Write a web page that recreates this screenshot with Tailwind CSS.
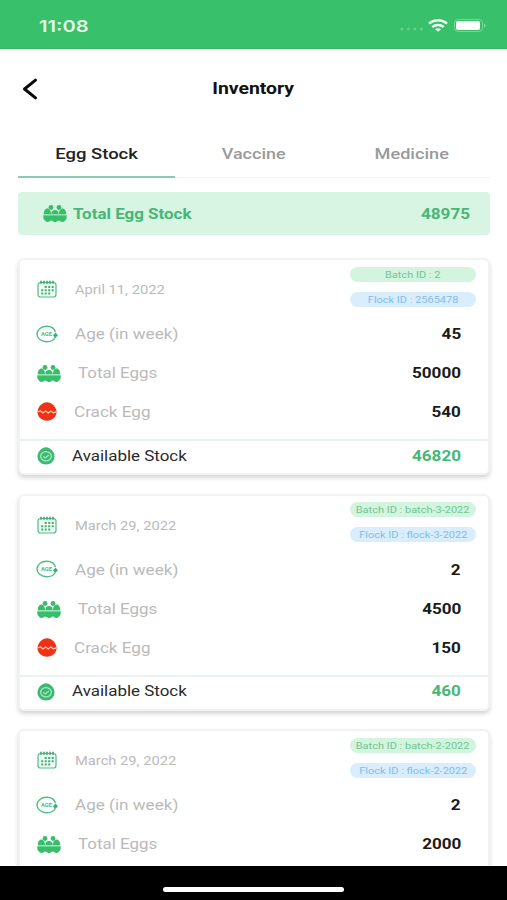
<!DOCTYPE html>
<html lang="en">
<head>
    <meta charset="UTF-8">
    <meta name="viewport" content="width=device-width, initial-scale=1.0">
    <title>Inventory</title>
    <script src="https://cdn.jsdelivr.net/npm/@tailwindcss/browser@4"></script>
</head>
<body class="h-screen flex flex-col overflow-hidden bg-white font-[Roboto,sans-serif]">
    <!-- Icons -->
    <svg class="hidden">
        <symbol id="eggs" viewBox="0 0 24 17">
            <g fill="#37be69">
                <circle cx="8" cy="2.500" r="2.400"/><circle cx="16" cy="2.500" r="2.400"/>
                <path d="M.8 9.300C.8 5.800 2.400 3.600 4.400 3.600S8 5.800 8 9.300zM8.300 9.300C8.300 6.200 9.900 5.100 12 5.100s3.700 1.100 3.700 4.200zM16 9.300c0-3.500 1.600-5.700 3.600-5.700s3.600 2.200 3.600 5.700z"/>
                <path d="M.3 10.200h23.400v2.400c0 1.200-.6 2.200-1.500 2.700-.6 1-1.600 1.600-2.700 1.600-1.200 0-2.200-.6-2.900-1.500-.5.300-1.100.3-1.600 0-.7.900-1.800 1.500-3 1.500s-2.300-.6-3-1.500c-.5.300-1.100.3-1.600 0-.7.900-1.700 1.500-2.900 1.500-1.100 0-2.100-.6-2.700-1.600-.9-.5-1.500-1.500-1.500-2.700z"/>
            </g>
            <path d="M.8 9.800h22.400" stroke="#86dfaa" stroke-width="1"/>
        </symbol>
        <symbol id="calendar" viewBox="0 0 20 18">
            <rect x="1" y="2.500" width="18" height="14.500" rx="2.500" fill="#f0fcf4" stroke="#4fbd83" stroke-width="1.200"/>
            <path d="M4 .7v3M7 .7v3M10 .7v3M13 .7v3M16 .7v3" stroke="#3fae74" stroke-width="1.700"/>
            <g stroke="#3fae74" stroke-width="2">
                <path d="M7.700 6.900h9" stroke-dasharray="2 1.500"/>
                <path d="M4.200 10.300h12.500M4.200 13.500h9" stroke-dasharray="2 1.500"/>
            </g>
        </symbol>
        <symbol id="age" viewBox="0 0 22 18">
            <path d="M19.500 7C18.400 3.600 15 1.200 10.800 1.200 5.400 1.200 1 4.600 1 9s4.400 7.800 9.800 7.800c3.800 0 6.900-1.600 8.500-4.300" fill="none" stroke="#4fbd83" stroke-width="1.400"/>
            <path d="M17 10.300 19.600 7.600 22 10.600 19 13z" fill="#3fae74"/>
            <text x="10.500" y="10.800" text-anchor="middle" textLength="11" lengthAdjust="spacingAndGlyphs" font-family="Roboto" font-weight="700" font-size="5" fill="#4fbd83">AGE</text>
        </symbol>
        <symbol id="crack" viewBox="0 0 20 19">
            <path d="M10 .3c4.700 0 9.500 5 9.500 9.900 0 4.700-4.300 8.500-9.500 8.500S.5 14.900.5 10.200C.5 5.300 5.300.3 10 .3z" fill="#ef3214"/>
            <path d="M.7 9.800 3.500 9l2.500 2 2.700-2 2.500 2 2.700-2 2.500 1.800 2.900-1" fill="none" stroke="#ffc9b5" stroke-width="1.300"/>
        </symbol>
        <symbol id="stock" viewBox="0 0 18 18">
            <path d="M9 .3c4 0 8.500 4.500 8.500 9.300 0 4.600-3.800 8-8.500 8s-8.500-3.400-8.500-8C.5 4.800 5 .3 9 .3z" fill="#3cb873"/>
            <ellipse cx="9" cy="9.300" rx="5.400" ry="4.600" fill="none" stroke="#a4ebc0" stroke-width="1.300"/>
            <path d="m6.300 9.300 2 1.700 3.500-3" fill="none" stroke="#a4ebc0" stroke-width="1.200"/>
        </symbol>
    </svg>

    <!-- Status bar -->
    <div class="h-12 shrink-0 bg-[#38c06a] border-b border-[#38b566] box-content flex items-center justify-between pl-[39px] pr-[21px]">
        <span class="pt-[3px] text-[16px] font-semibold text-[#e2f8e8] font-[Inter,sans-serif] origin-left scale-x-[1.26]">11:08</span>
        <div class="flex items-center pt-0.5">
            <svg width="24" height="4" viewBox="0 0 24 4" class="mt-2 mr-1" fill="#66cf8a"><circle cx="2" cy="2" r="1.500"/><circle cx="8.500" cy="2" r="1.500"/><circle cx="15" cy="2" r="1.500"/><circle cx="21.500" cy="2" r="1.500"/></svg>
            <svg width="20" height="13" viewBox="0 0 20 13" class="mr-1.5" fill="none" stroke="#f3fff6" stroke-width="2.400"><path d="M1 4.500c5.200-4.300 12.800-4.300 18 0M4.300 8c3.300-2.700 8.100-2.700 11.400 0"/><path d="M7 10.200c1.800-1.400 4.200-1.400 6 0l-3 2.500z" fill="#f3fff6" stroke="none"/></svg>
            <svg width="32" height="13" viewBox="0 0 32 13"><rect x=".5" y=".5" width="28" height="12" rx="3.500" fill="none" stroke="#74d695"/><rect x="2" y="2" width="24" height="9" rx="2" fill="#fff"/><path d="M30 4.500c2 .8 2 3.200 0 4z" fill="#86dca2"/></svg>
        </div>
    </div>

    <header class="h-20 shrink-0 grid grid-cols-3 items-center px-[22px]">
        <svg width="16" height="22" viewBox="0 0 16 22" fill="none" stroke="#0a0a0a" stroke-width="3" stroke-linecap="round" stroke-linejoin="round"><path d="M13.500 2.200 2.500 11l11 8.800"/></svg>
        <h1 class="text-center text-[16px] font-bold text-[#111] scale-x-[1.21]">Inventory</h1>
    </header>

    <nav class="ml-[18px] mr-[17px] h-[49px] shrink-0 grid grid-cols-3 text-center text-[15px] font-medium text-[#9a9a9a] leading-[50px] border-b border-[#f2f2f2]">
        <a class="h-[49px] text-[#222] border-b-2 border-[#8ccbaa]"><span class="inline-block scale-x-[1.23]">Egg Stock</span></a>
        <a><span class="inline-block scale-x-[1.2]">Vaccine</span></a>
        <a><span class="inline-block scale-x-[1.21]">Medicine</span></a>
    </nav>

    <section class="ml-[18px] mr-[17px] mt-3.5 h-[43px] shrink-0 flex items-center rounded bg-[#d8f4e2] pl-[25px] pr-5 text-[15px] font-bold text-[#46b777]">
        <svg class="w-6 h-[17px] mr-1.5"><use href="#eggs"/></svg>
        <span class="pt-px origin-left scale-x-[1.13]">Total Egg Stock</span>
        <span class="ml-auto pt-px origin-right scale-x-[1.14]">48975</span>
    </section>

    <main id="stockList" class="flex-1 min-h-0 overflow-hidden pl-[18px] pr-[17px] pt-[23px]"></main>

    <footer class="h-[34px] shrink-0 bg-black flex justify-center pt-[21px]">
        <div class="w-[181px] h-[5px] rounded-full bg-white"></div>
    </footer>

    <script>
        const batches = [
            { date: 'April 11, 2022', batch: '2', flock: '2565478', age: 45, total: 50000, crack: 540, available: 46820 },
            { date: 'March 29, 2022', batch: 'batch-3-2022', flock: 'flock-3-2022', age: 2, total: 4500, crack: 150, available: 460 },
            { date: 'March 29, 2022', batch: 'batch-2-2022', flock: 'flock-2-2022', age: 2, total: 2000 }
        ];

        // Crack and available rows only exist once the batch has been counted
        const countedRows = b => `
                <div class="h-[39px] flex items-center pl-[17px] pr-[27px]">
                    <svg class="w-5 h-[19px]"><use href="#crack"/></svg>
                    <span class="ml-[17px] pt-0.5 origin-left scale-x-[1.14]">Crack Egg</span>
                    <span class="ml-auto pt-0.5 font-bold text-[#1b1b1b] origin-right scale-x-[1.14]">${b.crack}</span>
                </div>
                <div class="mt-2 h-8 flex items-center border-t-2 border-[#e9f2ed] pl-[17px] pr-[27px]">
                    <svg class="w-[18px] h-[18px]"><use href="#stock"/></svg>
                    <span class="ml-[17px] text-[#2b2b2b] origin-left scale-x-[1.13]">Available Stock</span>
                    <span class="ml-auto font-bold text-[#46b777] origin-right scale-x-[1.14]">${b.available}</span>
                </div>`;

        document.getElementById('stockList').innerHTML = batches.map(b => `
            <article class="h-[217px] mb-[18.5px] rounded-md border-2 border-[#f2f2f2] bg-white shadow-[0_3px_4px_rgba(0,0,0,0.16)] text-[15px] text-[#bababa]">
                <div class="h-[54px] flex items-start justify-between pl-[17px] pr-3">
                    <div class="flex items-center pt-[19px]">
                        <svg class="w-5 h-[18px]"><use href="#calendar"/></svg>
                        <span class="ml-[18px] pt-px text-[13px] origin-left scale-x-[1.13]">${b.date}</span>
                    </div>
                    <div class="w-[126px] pt-[6.5px] flex flex-col gap-2.5 text-center text-[9px] leading-[17px]">
                        <div class="h-[15px] rounded-full bg-[#d3f4df] text-[#70c592]"><span class="inline-block whitespace-nowrap scale-x-[1.22]">Batch ID : ${b.batch}</span></div>
                        <div class="h-[15px] rounded-full bg-[#d9edfd] text-[#82bce8]"><span class="inline-block whitespace-nowrap scale-x-[1.22]">Flock ID : ${b.flock}</span></div>
                    </div>
                </div>
                <div class="h-[39px] flex items-center pl-4 pr-[27px]">
                    <svg class="w-[22px] h-[18px]"><use href="#age"/></svg>
                    <span class="ml-[17px] pt-0.5 origin-left scale-x-[1.14]">Age (in week)</span>
                    <span class="ml-auto pt-0.5 font-bold text-[#1b1b1b] origin-right scale-x-[1.14]">${b.age}</span>
                </div>
                <div class="h-[39px] flex items-center pl-[17px] pr-[27px]">
                    <svg class="w-6 h-[17px] mt-0.5"><use href="#eggs"/></svg>
                    <span class="ml-[17px] pt-0.5 origin-left scale-x-[1.13]">Total Eggs</span>
                    <span class="ml-auto pt-0.5 font-bold text-[#1b1b1b] origin-right scale-x-[1.14]">${b.total}</span>
                </div>${b.available ? countedRows(b) : ''}
            </article>`).join('');
    </script>
</body>
</html>
